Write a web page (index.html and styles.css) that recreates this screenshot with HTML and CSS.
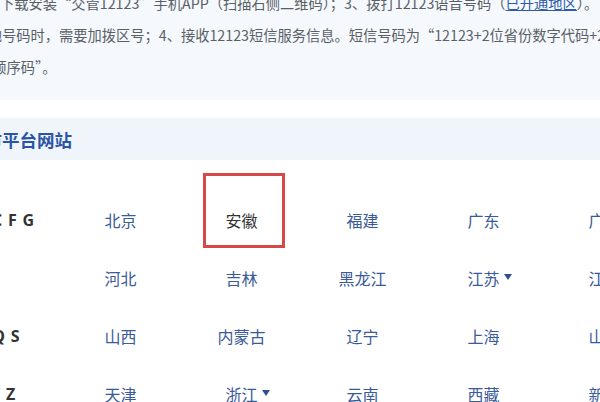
FILE: index.html
```html
<!DOCTYPE html>
<html lang="zh-CN">
<head>
<meta charset="utf-8">
<title>各省平台网站</title>
<link rel="stylesheet" href="styles.css">
</head>
<body>
<div class="page">
  <div class="intro">
    <p class="notes">
      <span class="ln ln1">下载安装“交管12123”手机APP（扫描右侧二维码）；3、拨打12123语音号码（<a class="link" href="#">已开通地区</a>）。</span>
      <span class="ln ln2">外地号码时，需要加拨区号；4、接收12123短信服务信息。短信号码为“12123+2位省份数字代码+2位</span>
      <span class="ln ln3">位顺序码”。</span>
    </p>
  </div>

  <div class="section-head">
    <h2 class="section-title">各省市平台网站</h2>
  </div>

  <div class="prov-grid">
    <div class="letters">A B C F G</div>
    <div class="prov"><span class="name">北京</span></div>
    <div class="prov"><span class="name current">安徽</span></div>
    <div class="prov"><span class="name">福建</span></div>
    <div class="prov"><span class="name">广东</span></div>
    <div class="prov"><span class="name">广西</span></div>

    <div class="letters"></div>
    <div class="prov"><span class="name">河北</span></div>
    <div class="prov"><span class="name">吉林</span></div>
    <div class="prov"><span class="name">黑龙江</span></div>
    <div class="prov"><span class="name has-menu">江苏</span></div>
    <div class="prov"><span class="name">江西</span></div>

    <div class="letters">L N Q S</div>
    <div class="prov"><span class="name">山西</span></div>
    <div class="prov"><span class="name">内蒙古</span></div>
    <div class="prov"><span class="name">辽宁</span></div>
    <div class="prov"><span class="name">上海</span></div>
    <div class="prov"><span class="name">山东</span></div>

    <div class="letters">T X Y Z</div>
    <div class="prov"><span class="name">天津</span></div>
    <div class="prov"><span class="name has-menu">浙江</span></div>
    <div class="prov"><span class="name">云南</span></div>
    <div class="prov"><span class="name">西藏</span></div>
    <div class="prov"><span class="name">新疆</span></div>
  </div>

  <div class="highlight-box"></div>
</div>
</body>
</html>
```

FILE: styles.css
```css
html, body {
  margin: 0;
  padding: 0;
  background: #ffffff;
}
body {
  width: 600px;
  height: 402px;
  overflow: hidden;
  font-family: "Noto Sans CJK SC", "Noto Sans", sans-serif;
}
.page {
  position: relative;
  width: 600px;
  height: 402px;
  overflow: hidden;
}
.intro {
  background: #f5f8fd;
  margin-top: -13px;
  padding-bottom: 17px;
}
.notes {
  margin: 0;
  font-size: 14.25px;
  line-height: 32px;
  color: #5a5f66;
  white-space: nowrap;
}
.ln {
  display: block;
}
.ln1 { margin-left: 0; }
.ln2 { margin-left: -26.5px; }
.ln3 { margin-left: -22px; }
.link {
  color: #2e5aa6;
  text-decoration: underline;
}
.section-head {
  margin-top: 18px;
  height: 42px;
  background: #f0f5fc;
  display: flex;
  align-items: center;
}
.section-title {
  margin: 0 0 0 -50.5px;
  font-size: 17.5px;
  font-weight: bold;
  color: #2a54a5;
  white-space: nowrap;
}
.prov-grid {
  margin-top: 31px;
  margin-left: -35px;
  display: grid;
  grid-template-columns: 95px repeat(5, 121px);
  grid-auto-rows: 58px;
  align-items: center;
}
.letters {
  font-family: "Open Sans", "Noto Sans", sans-serif;
  font-weight: 700;
  font-size: 16px;
  word-spacing: 1.5px;
  color: #333333;
  white-space: nowrap;
  margin-left: -6px;
}
.prov {
  text-align: center;
}
.name {
  position: relative;
  font-size: 16px;
  color: #3a5a98;
}
.name.current {
  color: #333333;
}
.has-menu::after {
  content: "";
  position: absolute;
  left: calc(100% + 4px);
  top: 50%;
  margin-top: -4px;
  border-left: 4px solid transparent;
  border-right: 4px solid transparent;
  border-top: 6px solid #2b4f92;
}
.highlight-box {
  position: absolute;
  left: 203px;
  top: 173px;
  width: 76px;
  height: 69px;
  border: 3px solid #d6484a;
}
```
